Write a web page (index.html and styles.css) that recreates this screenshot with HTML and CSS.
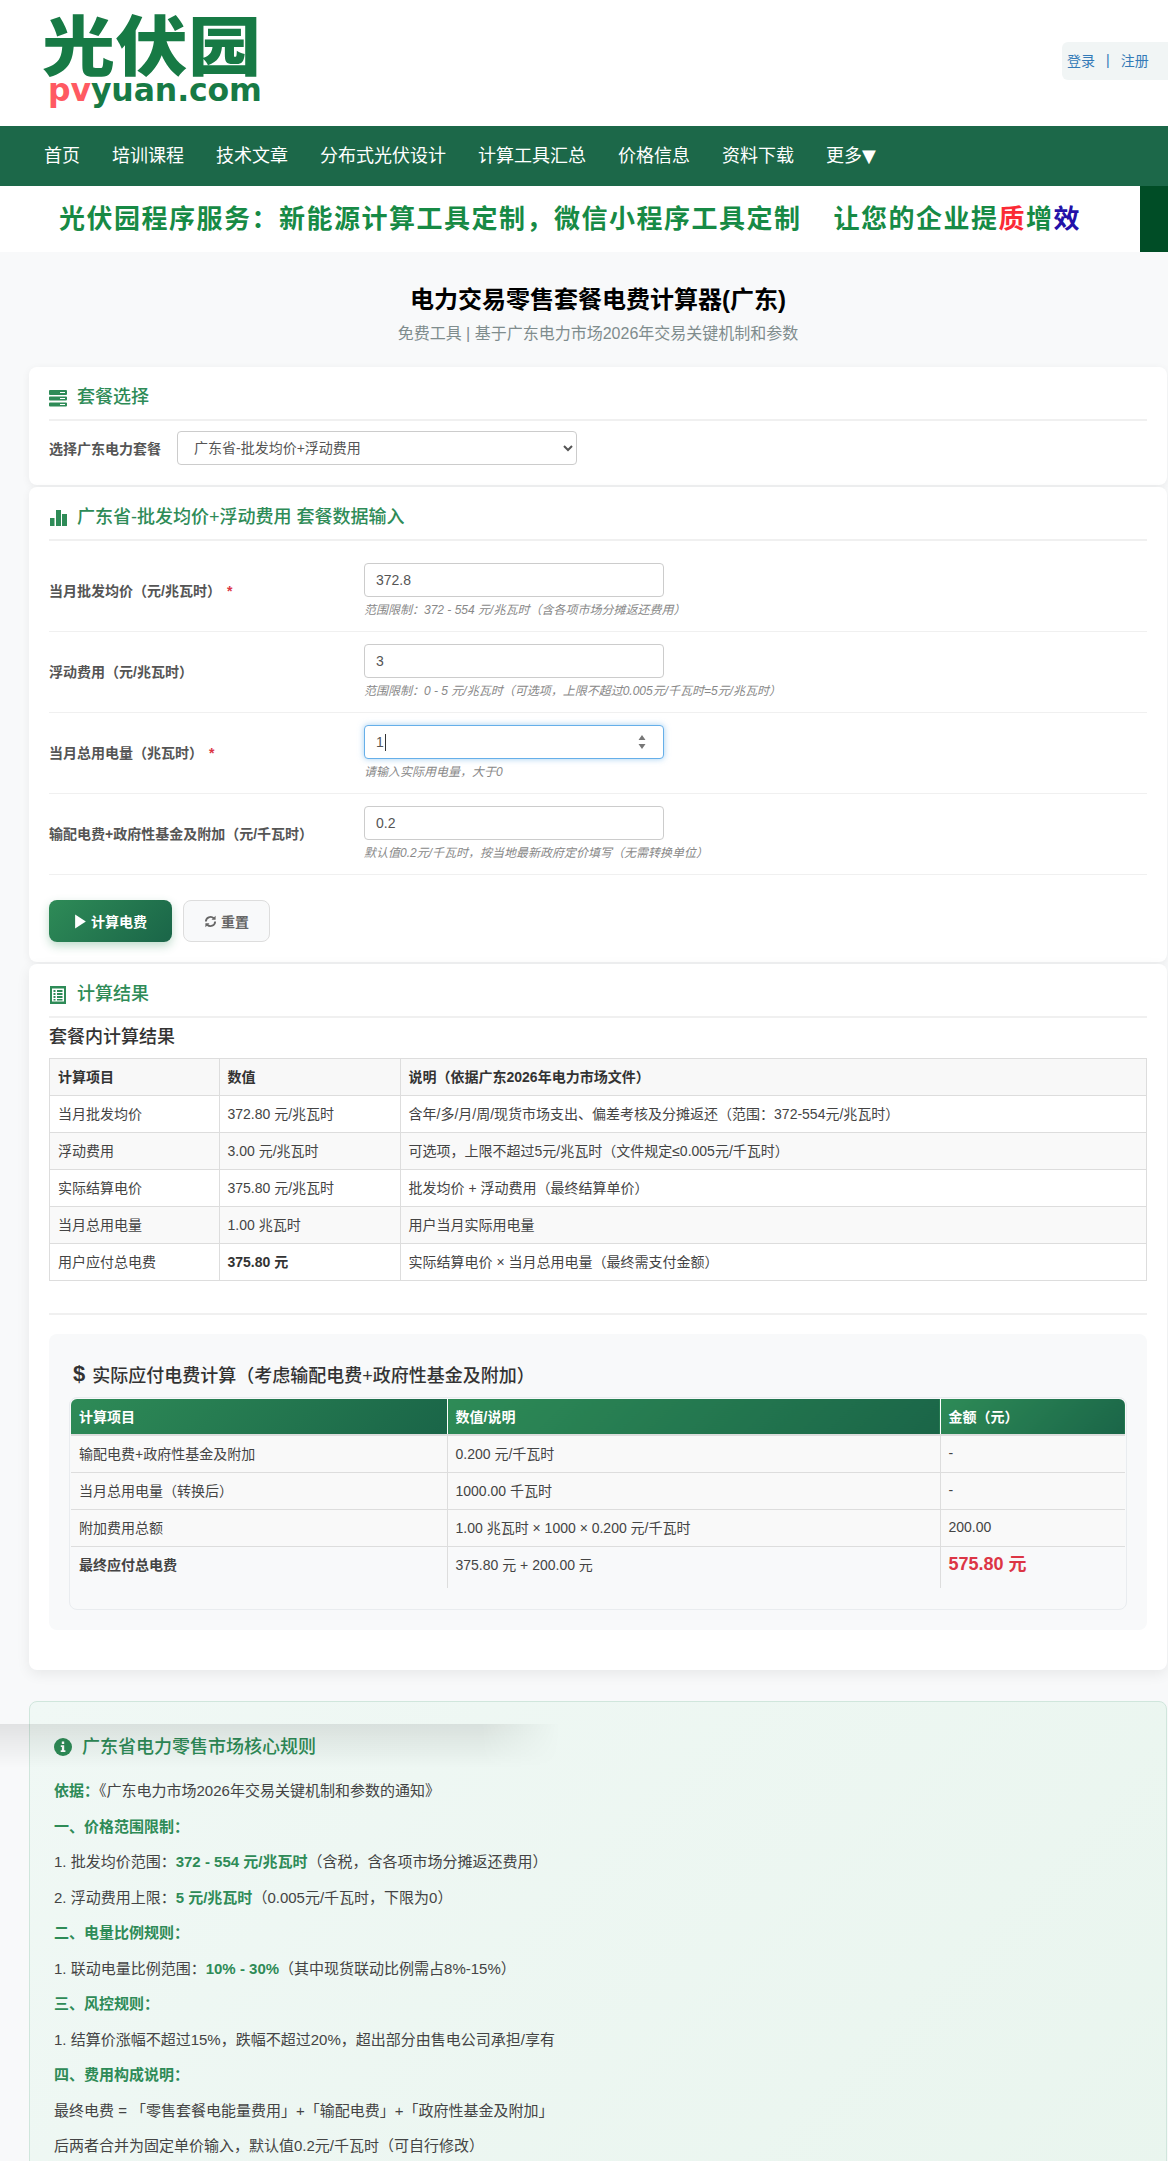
FILE: index.html
```html
<!DOCTYPE html>
<html lang="zh-CN">
<head>
<meta charset="utf-8">
<title>电力交易零售套餐电费计算器(广东)</title>
<link rel="stylesheet" href="styles.css">
</head>
<body>
<div class="page">
  <header class="site-header">
    <div class="logo">
      <div class="logo-cn">光伏园</div>
      <div class="logo-en"><span class="logo-pv">pv</span>yuan.com</div>
    </div>
    <div class="auth"><a>登录</a><span class="auth-sep">|</span><a>注册</a></div>
  </header>
  <nav class="nav">
    <a>首页</a><a>培训课程</a><a>技术文章</a><a>分布式光伏设计</a><a>计算工具汇总</a><a>价格信息</a><a>资料下载</a><a>更多<span class="tri">▼</span></a>
  </nav>
  <div class="banner">
    <div class="banner-text">光伏园程序服务&#xFF1A;新能源计算工具定制&#xFF0C;微信小程序工具定制<span class="banner-gap"></span>让您的企业提<span class="red">质</span>增<span class="blue">效</span></div>
    <div class="banner-side"></div>
  </div>
  <main class="main">
    <div class="heading">
      <h1>电力交易零售套餐电费计算器(广东)</h1>
      <p>免费工具 | 基于广东电力市场2026年交易关键机制和参数</p>
    </div>

    <section class="card">
      <h2 class="card-title">
        <svg class="ico" viewBox="0 0 18 18"><path fill="#2e8b57" d="M1 1h16a1 1 0 0 1 1 1v3a1 1 0 0 1-1 1H1a1 1 0 0 1-1-1V2a1 1 0 0 1 1-1zm0 6.500h16a1 1 0 0 1 1 1v2a1 1 0 0 1-1 1H1a1 1 0 0 1-1-1v-2a1 1 0 0 1 1-1zm0 6h16a1 1 0 0 1 1 1v2a1 1 0 0 1-1 1H1a1 1 0 0 1-1-1v-2a1 1 0 0 1 1-1z"/><path stroke="#fff" stroke-width="1" d="M11 3.500h5M11 9.500h5M11 15.500h5"/></svg>
        套餐选择
      </h2>
      <div class="select-row">
        <label class="select-label">选择广东电力套餐</label>
        <select class="select"><option>广东省-批发均价+浮动费用</option></select>
      </div>
    </section>

    <section class="card">
      <h2 class="card-title">
        <svg class="ico" viewBox="0 0 18 18"><path fill="#2e8b57" d="M1 9h4.500v8H1zM7 1h5v16H7zM13 5h5v12h-5z"/></svg>
        广东省-批发均价+浮动费用 套餐数据输入
      </h2>
      <div class="form">
        <div class="form-row">
          <label class="form-label">当月批发均价&#xFF08;元/兆瓦时&#xFF09;<span class="req">*</span></label>
          <div class="field">
            <input class="input" type="text" value="372.8">
            <div class="hint">范围限制&#xFF1A;372 - 554 元/兆瓦时&#xFF08;含各项市场分摊返还费用&#xFF09;</div>
          </div>
        </div>
        <div class="form-row">
          <label class="form-label">浮动费用&#xFF08;元/兆瓦时&#xFF09;</label>
          <div class="field">
            <input class="input" type="text" value="3">
            <div class="hint">范围限制&#xFF1A;0 - 5 元/兆瓦时&#xFF08;可选项&#xFF0C;上限不超过0.005元/千瓦时=5元/兆瓦时&#xFF09;</div>
          </div>
        </div>
        <div class="form-row">
          <label class="form-label">当月总用电量&#xFF08;兆瓦时&#xFF09;<span class="req">*</span></label>
          <div class="field">
            <div class="input input-focus"><span>1</span><span class="caret"></span>
              <svg class="spin" viewBox="0 0 8 14"><path fill="#777" d="M4 0l3.500 5H.5zM4 14L.5 9h7z"/></svg>
            </div>
            <div class="hint">请输入实际用电量&#xFF0C;大于0</div>
          </div>
        </div>
        <div class="form-row">
          <label class="form-label">输配电费+政府性基金及附加&#xFF08;元/千瓦时&#xFF09;</label>
          <div class="field">
            <input class="input" type="text" value="0.2">
            <div class="hint">默认值0.2元/千瓦时&#xFF0C;按当地最新政府定价填写&#xFF08;无需转换单位&#xFF09;</div>
          </div>
        </div>
      </div>
      <div class="actions">
        <button class="btn btn-primary">
          <svg class="btn-ico" viewBox="0 0 12 14"><path fill="#fff" d="M1 .5L11 7 1 13.500z"/></svg>
          计算电费
        </button>
        <button class="btn btn-reset">
          <svg class="btn-ico" viewBox="0 0 14 14"><path fill="none" stroke="#666" stroke-width="2" d="M2 7a5 5 0 0 1 8.500-3.500M12 7a5 5 0 0 1-8.500 3.500"/><path fill="#666" d="M12.500 .8v4.400H8.100zM1.500 13.200V8.800h4.400z"/></svg>
          重置
        </button>
      </div>
    </section>

    <section class="card card-result">
      <h2 class="card-title">
        <svg class="ico ico-table" viewBox="0 0 18 18"><path fill="#2e8b57" d="M1 0h16v18H1zM3 2.500v13h12v-13z"/><path fill="#2e8b57" d="M4.500 4h2v2h-2zM8 4h5.500v2H8zM4.500 7h2v2h-2zM8 7h5.500v2H8zM4.500 10h2v2h-2zM8 10h5.500v2H8zM4.500 13h2v1.500h-2zM8 13h5.500v1.500H8z"/></svg>
        计算结果
      </h2>
      <h3 class="sub-title">套餐内计算结果</h3>
      <table class="table-plain">
        <colgroup><col class="c1"><col class="c2"><col></colgroup>
        <thead><tr><th>计算项目</th><th>数值</th><th>说明&#xFF08;依据广东2026年电力市场文件&#xFF09;</th></tr></thead>
        <tbody>
          <tr><td>当月批发均价</td><td>372.80 元/兆瓦时</td><td>含年/多/月/周/现货市场支出、偏差考核及分摊返还&#xFF08;范围&#xFF1A;372-554元/兆瓦时&#xFF09;</td></tr>
          <tr><td>浮动费用</td><td>3.00 元/兆瓦时</td><td>可选项&#xFF0C;上限不超过5元/兆瓦时&#xFF08;文件规定≤0.005元/千瓦时&#xFF09;</td></tr>
          <tr><td>实际结算电价</td><td>375.80 元/兆瓦时</td><td>批发均价 + 浮动费用&#xFF08;最终结算单价&#xFF09;</td></tr>
          <tr><td>当月总用电量</td><td>1.00 兆瓦时</td><td>用户当月实际用电量</td></tr>
          <tr><td>用户应付总电费</td><td><strong>375.80 元</strong></td><td>实际结算电价 × 当月总用电量&#xFF08;最终需支付金额&#xFF09;</td></tr>
        </tbody>
      </table>
      <hr class="divider">
      <div class="pay-box">
        <h3 class="pay-title"><span class="dollar">$</span>实际应付电费计算&#xFF08;考虑输配电费+政府性基金及附加&#xFF09;</h3>
        <div class="pay-wrap">
          <table class="table-pay">
            <colgroup><col class="p1"><col class="p2"><col></colgroup>
            <thead><tr><th>计算项目</th><th>数值/说明</th><th>金额&#xFF08;元&#xFF09;</th></tr></thead>
            <tbody>
              <tr><td>输配电费+政府性基金及附加</td><td>0.200 元/千瓦时</td><td>-</td></tr>
              <tr><td>当月总用电量&#xFF08;转换后&#xFF09;</td><td>1000.00 千瓦时</td><td>-</td></tr>
              <tr><td>附加费用总额</td><td>1.00 兆瓦时 × 1000 × 0.200 元/千瓦时</td><td>200.00</td></tr>
              <tr class="row-final"><td><strong>最终应付总电费</strong></td><td>375.80 元 + 200.00 元</td><td><strong class="total">575.80 元</strong></td></tr>
            </tbody>
          </table>
        </div>
      </div>
    </section>

    <section class="rules">
      <h2 class="rules-title">
        <svg class="ico-info" viewBox="0 0 18 18"><circle cx="9" cy="9" r="9" fill="#2e8b57"/><path fill="#fff" d="M7.800 3.500h2.400v2.400H7.800zM6.800 7.300h3.400v5h1.200v1.800H6.700v-1.800h1.200V9.100H6.800z"/></svg>
        广东省电力零售市场核心规则
      </h2>
      <p><b>依据&#xFF1A;</b>《广东电力市场2026年交易关键机制和参数的通知》</p>
      <p><b>一、价格范围限制&#xFF1A;</b></p>
      <p>1. 批发均价范围&#xFF1A;<b>372 - 554 元/兆瓦时</b>&#xFF08;含税&#xFF0C;含各项市场分摊返还费用&#xFF09;</p>
      <p>2. 浮动费用上限&#xFF1A;<b>5 元/兆瓦时</b>&#xFF08;0.005元/千瓦时&#xFF0C;下限为0&#xFF09;</p>
      <p><b>二、电量比例规则&#xFF1A;</b></p>
      <p>1. 联动电量比例范围&#xFF1A;<b>10% - 30%</b>&#xFF08;其中现货联动比例需占8%-15%&#xFF09;</p>
      <p><b>三、风控规则&#xFF1A;</b></p>
      <p>1. 结算价涨幅不超过15%&#xFF0C;跌幅不超过20%&#xFF0C;超出部分由售电公司承担/享有</p>
      <p><b>四、费用构成说明&#xFF1A;</b></p>
      <p>最终电费 = 「零售套餐电能量费用」+「输配电费」+「政府性基金及附加」</p>
      <p>后两者合并为固定单价输入&#xFF0C;默认值0.2元/千瓦时&#xFF08;可自行修改&#xFF09;</p>
    </section>
  </main>
  <div class="stray-shadow"></div>
</div>
</body>
</html>
```
FILE: styles.css
```css
* { box-sizing: border-box; }
html, body { margin: 0; padding: 0; }
body {
  font-family: "Liberation Sans", "Noto Sans CJK SC", sans-serif;
  color: #333;
  background: #f8f9fa;
  font-size: 14px;
}
.page { position: relative; height: 2161px; overflow: hidden; }

.site-header {
  height: 126px;
  background: #fff;
  display: flex;
  justify-content: space-between;
  align-items: flex-start;
  padding: 0 0 0 42px;
}
.logo { width: 222px; padding-top: 6px; }
.logo-cn {
  font-size: 73px;
  font-weight: 900;
  line-height: 72px;
  height: 72px;
  color: #177a45;
  letter-spacing: 0;
  white-space: nowrap;
  transform: translateY(8px) scaleY(.88);
  transform-origin: 0 30%;
}
.logo-en {
  font-family: "DejaVu Sans", sans-serif;
  font-size: 31.500px;
  font-weight: 700;
  line-height: 26px;
  color: #177a45;
  padding-left: 6px;
  margin-top: -1px;
  white-space: nowrap;
  letter-spacing: -.1px;
}
.logo-pv { color: #ff5a62; }
.auth {
  margin-top: 42px;
  width: 106px;
  height: 38px;
  background: #f1f5f5;
  border-radius: 6px 0 0 6px;
  display: flex;
  align-items: center;
  padding: 0 0 2px 5px;
  font-size: 14px;
  color: #337ab7;
}
.auth-sep { margin: 0 11px 0 11px; color: #337ab7; }

.nav {
  height: 60px;
  background: #1c6849;
  display: flex;
  align-items: center;
  padding: 0 0 4px 28px;
}
.nav a { color: #fff; font-size: 18px; padding: 0 16px; white-space: nowrap; }
.tri { font-family: "DejaVu Sans", sans-serif; font-size: 18px; }

.banner {
  height: 66px;
  background: #fff;
  display: flex;
  justify-content: space-between;
}
.banner-text {
  padding: 15px 0 0 59px;
  font-size: 26px;
  line-height: 36px;
  font-weight: 700;
  letter-spacing: 1.500px;
  color: #178a45;
  white-space: nowrap;
}
.banner-gap { display: inline-block; width: 32px; }
.red { color: #fb2a35; }
.blue { color: #2310a8; }
.banner-side { width: 28px; background: #004d26; }

.main { padding: 0 1px 0 29px; }
.heading { text-align: center; height: 115px; padding-top: 30px; }
.heading h1 { margin: 0; font-size: 24px; line-height: 36px; font-weight: 700; color: #000; }
.heading p { margin: 2px 0 0; font-size: 16px; line-height: 28px; color: #7f8c8d; }

.card {
  background: #fff;
  border-radius: 8px;
  padding: 20px;
  margin-bottom: 2px;
  box-shadow: 0 2px 8px rgba(0, 0, 0, .06);
}
.card-title {
  margin: 0 0 10px;
  height: 34px;
  padding-bottom: 11px;
  border-bottom: 2px solid #f0f0f0;
  display: flex;
  align-items: center;
  font-size: 18px;
  font-weight: 500;
  line-height: 21px;
  color: #2e8b57;
}
.ico { width: 18px; height: 18px; margin-right: 10px; flex: none; }

.select-row { display: flex; align-items: center; gap: 16px; }
.select-label { font-weight: 700; color: #555; font-size: 14px; }
.select {
  width: 400px;
  height: 34px;
  padding: 0 12px;
  border: 1px solid #ccc;
  border-radius: 4px;
  background: #fff;
  color: #555;
  font: inherit;
  font-size: 14px;
}

.form-row {
  display: flex;
  align-items: center;
  padding: 12px 0;
  border-bottom: 1px solid #f0f0f0;
}
.form-label { width: 315px; flex: none; font-size: 14px; font-weight: 700; color: #555; padding-bottom: 2px; }
.req { color: #dc3545; margin-left: 6px; font-size: 14px; }
.field { flex: 1; }
.input {
  display: block;
  width: 300px;
  height: 34px;
  padding: 0 11px;
  border: 1px solid #ccc;
  border-radius: 4px;
  background: #fff;
  color: #555;
  font: inherit;
  font-size: 14px;
}
.input-focus {
  display: flex;
  align-items: center;
  border-color: #66afe9;
  box-shadow: 0 0 6px rgba(102, 175, 233, .6);
  position: relative;
}
.caret { width: 1px; height: 17px; background: #333; margin-left: 1px; }
.spin { width: 8px; height: 14px; margin-left: auto; margin-right: 6px; }
.hint { margin-top: 4px; height: 18px; font-size: 12px; line-height: 18px; font-style: italic; color: #888; white-space: nowrap; }

.actions { display: flex; gap: 11px; margin-top: 25px; }
.btn {
  height: 42px;
  border-radius: 8px;
  font: inherit;
  font-size: 14px;
  font-weight: 700;
  display: flex;
  align-items: center;
  justify-content: center;
  gap: 4px;
}
.btn-ico { width: 13px; height: 15px; }
.btn-primary {
  width: 123px;
  border: 0;
  color: #fff;
  background: linear-gradient(135deg, #2e8b57, #1a6548);
  box-shadow: 0 4px 10px rgba(46, 139, 87, .3);
}
.btn-reset {
  width: 87px;
  border: 1px solid #ddd;
  color: #666;
  background: #f8f9fa;
}

.card-result { padding-bottom: 40px; margin-bottom: 31px; box-shadow: 0 4px 14px rgba(0, 0, 0, .07); }
.card-result .card-title { margin-bottom: 7px; }
.sub-title { margin: 0 0 9px; font-size: 18px; line-height: 24px; font-weight: 500; color: #333; }
table { border-collapse: collapse; table-layout: fixed; width: 100%; font-size: 14px; }
.table-plain th, .table-plain td {
  height: 37px;
  border: 1px solid #ddd;
  padding: 0 8px 2px;
  text-align: left;
  color: #444;
  white-space: nowrap;
}
.table-plain th { background: #f8f8f8; color: #333; font-weight: 700; }
.table-plain tbody tr:nth-child(even) td { background: #f9f9f9; }
.table-plain td strong { color: #333; }
.c1 { width: 169.500px; }
.c2 { width: 181px; }
.divider { margin: 32px 0 19px; border: 0; height: 2px; background: #f0f0f0; }

.pay-box { background: #f8f9fa; border-radius: 8px; padding: 20px; }
.pay-title {
  margin: 0 0 1px;
  padding: 0 0 2px 4px;
  height: 42px;
  display: flex;
  align-items: center;
  font-size: 18px;
  font-weight: 500;
  color: #333;
}
.dollar { font-size: 22px; font-weight: 700; margin-right: 7px; }
.pay-wrap { border: 1px solid #e9ecef; border-radius: 8px; padding: 1px 1px 21px; }
.table-pay { color: #444; }
.table-pay th, .table-pay td { padding: 0 8px 2px; text-align: left; white-space: nowrap; }
.table-pay th {
  height: 36px;
  color: #fff;
  font-weight: 700;
  background: linear-gradient(135deg, #2e8b57, #1a6548);
  border-right: 1px solid #fff;
}
.table-pay th:last-child { border-right: 0; border-top-right-radius: 6px; }
.table-pay th:first-child { border-top-left-radius: 6px; }
.table-pay thead tr { border-bottom: 2px solid #ddd; }
.table-pay td { height: 37px; border-bottom: 1px solid #ddd; border-right: 1px solid #ddd; background: #f9f9f9; }
.table-pay td:last-child { border-right: 0; }
.table-pay .row-final td { height: 42px; border-bottom: 0; background: #f8f9fa; vertical-align: top; padding-top: 7px; }
.table-pay strong { color: #444; }
.table-pay .total { color: #dc3545; font-size: 18px; line-height: 20px; }
.p1 { width: 376px; }
.p2 { width: 493px; }

.rules {
  background: linear-gradient(135deg, #f0f8f5, #e9f5ee);
  border: 1px solid #d0e6dc;
  border-radius: 8px;
  padding: 31px 24px 24px;
  font-size: 15px;
  color: #444;
}
.rules-title {
  margin: 0 0 18px;
  display: flex;
  align-items: center;
  font-size: 18px;
  font-weight: 500;
  line-height: 28px;
  color: #2e8b57;
}
.ico-info { width: 18px; height: 18px; margin-right: 10px; flex: none; }
.rules p { margin: 0 0 12px; line-height: 23.500px; white-space: nowrap; }
.rules b { color: #2e8b57; font-weight: 700; }

.stray-shadow {
  position: absolute;
  left: 0;
  top: 1724px;
  width: 560px;
  height: 44px;
  background: linear-gradient(to bottom, rgba(0, 0, 0, .09), rgba(0, 0, 0, 0));
  -webkit-mask-image: linear-gradient(to right, #000 86%, transparent);
  mask-image: linear-gradient(to right, #000 86%, transparent);
  pointer-events: none;
}
```
